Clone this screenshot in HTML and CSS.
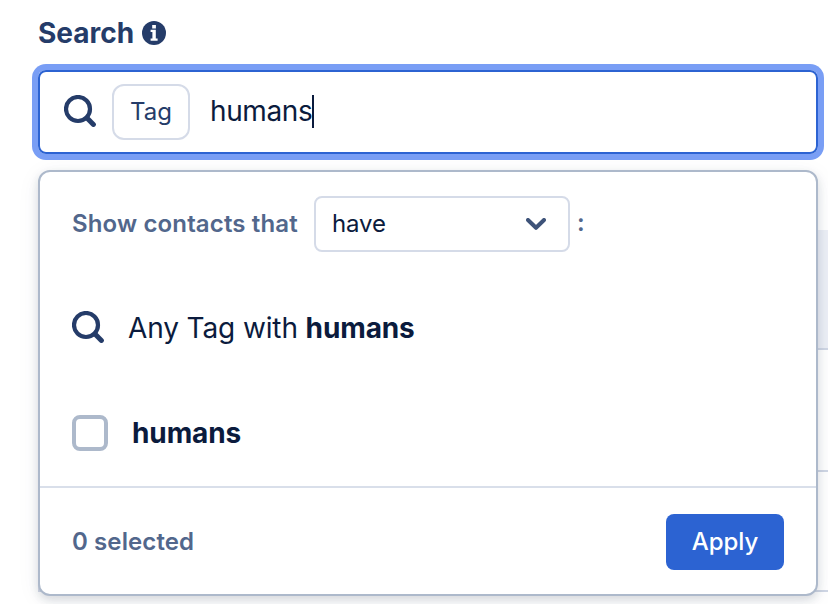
FILE: index.html
```html
<!DOCTYPE html>
<html lang="en">

<head>
    <meta charset="UTF-8">
    <meta name="viewport" content="width=device-width, initial-scale=1.0">
    <title>Search contacts</title>
    <link rel="stylesheet" href="styles.css">
</head>

<body>
    <div class="wrap">
        <div class="label">
            <span class="label-text">Search</span>
            <svg class="info" viewBox="0 0 24 24">
                <circle cx="12" cy="12" r="12" fill="#253c69"/>
                <path d="M10.2 4h3.7v3.4h-3.7zM8.6 8.8h5.2v8.7h1.8v2.2H8.6v-2.2h1.8V11H8.6z" fill="#fff"/>
            </svg>
        </div>
        <div class="field">
            <svg class="icon-search" viewBox="0 0 32 32">
                <circle cx="14" cy="14" r="12"/>
                <path class="handle" d="M23 23l6.4 6.4"/>
            </svg>
            <span class="tag">Tag</span>
            <span class="typed">humans</span>
            <span class="caret"></span>
        </div>

        <!-- contacts table, mostly covered by the dropdown -->
        <div class="table">
            <div class="table-head"></div>
            <div class="table-row"></div>
            <div class="table-row"></div>
        </div>

        <div class="dropdown">
            <div class="filter">
                <span class="filter-text">Show contacts that</span>
                <div class="select">
                    <span class="select-text">have</span>
                    <svg class="chevron" viewBox="0 0 20 12">
                        <path d="M2 2l8 7.8L18 2"/>
                    </svg>
                </div>
                <span class="colon">:</span>
            </div>
            <div class="option any">
                <svg class="icon-search" viewBox="0 0 32 32">
                    <circle cx="14" cy="14" r="12"/>
                    <path class="handle" d="M23 23l6.4 6.4"/>
                </svg>
                <span class="any-text">Any Tag with <b>humans</b></span>
            </div>
            <div class="option">
                <span class="checkbox"></span>
                <b class="option-text">humans</b>
            </div>
            <div class="footer">
                <span class="count">0 selected</span>
                <button class="apply">Apply</button>
            </div>
        </div>
    </div>
</body>

</html>
```
FILE: styles.css
```css
* {
    margin: 0;
    padding: 0;
    box-sizing: border-box;
}
body {
    background: #fff;
    color: #0b1b3d;
    font-family: Inter, "Liberation Sans", sans-serif;
    font-size: 28px;
    overflow: hidden;
}
b {
    font-weight: 700;
}
.wrap {
    position: relative;
    height: 604px;
    padding: 16px 10px 0 38px;
    overflow: hidden;
}
.label {
    display: flex;
    align-items: center;
    gap: 8px;
    height: 34px;
    margin-bottom: 20px;
    color: #253c69;
    font-weight: 700;
}
.label-text {
    font-size: 28px;
}
.info {
    width: 24px;
    height: 24px;
}
.field {
    display: flex;
    align-items: center;
    height: 84px;
    padding-left: 24px;
    border: 2px solid #2c63d2;
    border-radius: 8px;
    box-shadow: 0 0 0 6px #799ef5;
}
.icon-search {
    flex: none;
    width: 32px;
    height: 32px;
    margin-bottom: 2px;
    fill: none;
    stroke: #253c69;
    stroke-width: 4.2;
    stroke-linecap: round;
}
.icon-search .handle {
    stroke-width: 5;
}
.tag {
    width: 78px;
    height: 56px;
    margin: 0 20px 0 16px;
    border: 2px solid #d5dbe8;
    border-radius: 12px;
    color: #253c69;
    font-size: 24px;
    line-height: 52px;
    text-align: center;
}
.typed {
    padding-bottom: 2px;
    letter-spacing: -0.4px;
}
.caret {
    width: 2px;
    height: 33px;
    margin-bottom: 1px;
    background: #0b1b3d;
}

.table {
    width: 800px;
    margin-top: 76px;
    border-left: 2px solid #d5dbe8;
}
.table-head {
    height: 120px;
    border-bottom: 2px solid #d0d7e5;
    background: #eceff6;
}
.table-row {
    height: 122px;
    border-bottom: 2px solid #d0d7e5;
}
.table-row:last-child {
    height: 120px;
}

.dropdown {
    position: absolute;
    top: 170px;
    left: 38px;
    width: 780px;
    height: 426px;
    border: 2px solid #adb9cb;
    border-radius: 12px;
    background: #fff;
    box-shadow: 0 4px 24px rgba(37, 60, 105, 0.06), 0 4px 10px rgba(20, 30, 50, 0.14);
}
.filter {
    display: flex;
    align-items: center;
    height: 104px;
    padding-left: 32px;
    color: #52678c;
    font-size: 24px;
    font-weight: 600;
}
.filter-text {
    width: 226px;
    padding-bottom: 2px;
    letter-spacing: 0.14px;
    white-space: nowrap;
}
.select {
    display: flex;
    align-items: center;
    justify-content: space-between;
    width: 256px;
    height: 56px;
    margin: 0 7px 0 16px;
    padding: 0 22px 0 16px;
    border: 2px solid #d5dbe8;
    border-radius: 8px;
    color: #0b1b3d;
    font-weight: 400;
}
.select-text {
    padding-bottom: 2px;
    letter-spacing: -0.1px;
}
.colon {
    padding-bottom: 3px;
}
.chevron {
    width: 20px;
    height: 12px;
    fill: none;
    stroke: #3e5379;
    stroke-width: 4;
    stroke-linecap: round;
    stroke-linejoin: round;
}
.option {
    display: flex;
    align-items: center;
    height: 104px;
    padding-left: 32px;
}
.any {
    height: 105px;
    padding-bottom: 2px;
}
.any-text {
    margin-left: 24px;
    letter-spacing: -0.12px;
}
.checkbox {
    width: 36px;
    height: 36px;
    border: 4px solid #adb9cb;
    border-radius: 8px;
}
.option-text {
    margin-left: 24px;
    letter-spacing: -0.1px;
}
.footer {
    display: flex;
    align-items: center;
    justify-content: space-between;
    height: 110px;
    margin-top: 1px;
    padding: 0 32px;
    border-top: 2px solid #d9dfea;
    color: #52678c;
    font-size: 24px;
    font-weight: 600;
}
.count {
    padding-bottom: 1px;
    letter-spacing: 0.1px;
}
.apply {
    width: 118px;
    height: 56px;
    padding-bottom: 2px;
    border: none;
    border-radius: 8px;
    background: #2c63d2;
    color: #fff;
    font-family: inherit;
    font-size: 24px;
    font-weight: 500;
    cursor: pointer;
}
```
